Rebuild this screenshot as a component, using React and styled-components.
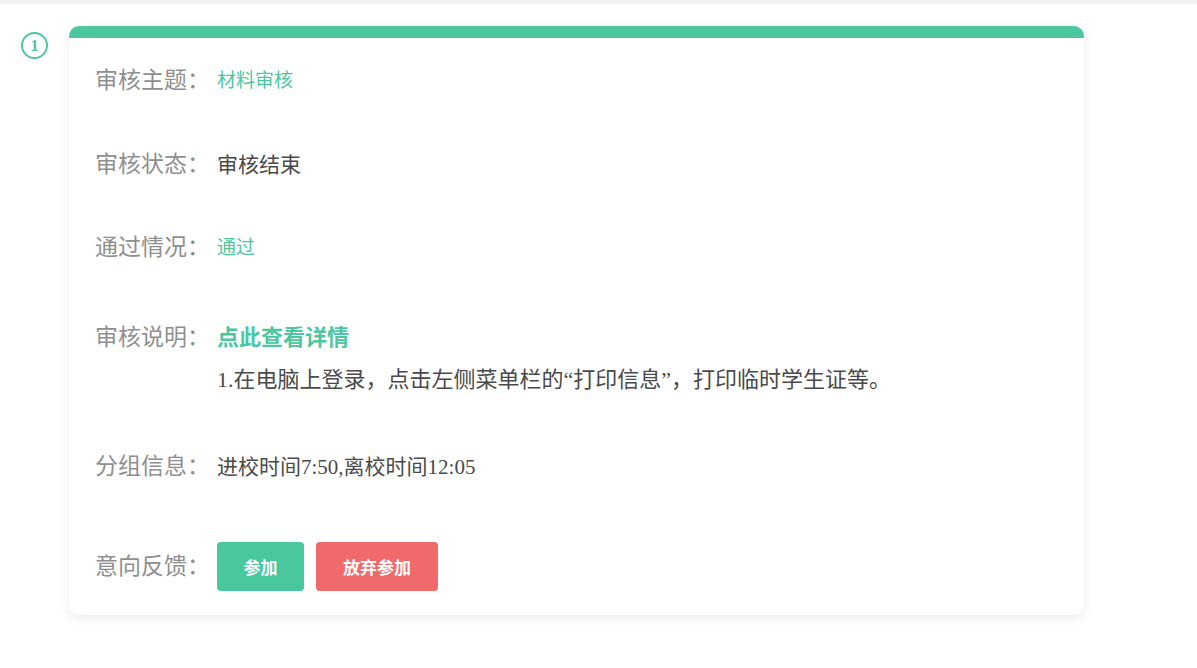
import React from "react";
import styled, { createGlobalStyle } from "styled-components";

const GlobalStyle = createGlobalStyle`
  html, body {
    margin: 0;
    padding: 0;
    background: #fff;
  }
  body {
    font-family: "Liberation Serif", "Noto Sans CJK SC", serif;
  }
`;

const TopStrip = styled.div`
  height: 4px;
  background: #f1f1f3;
`;

const Page = styled.div`
  display: flex;
  align-items: flex-start;
  gap: 21px;
  padding: 22px 0 40px 21px;
`;

const Step = styled.div`
  box-sizing: border-box;
  width: 27px;
  height: 27px;
  margin-top: 6px;
  border: 2px solid #4cc79f;
  border-radius: 50%;
  display: flex;
  align-items: center;
  justify-content: center;
  color: #4cc79f;
  font-size: 16px;
  font-weight: bold;
  flex-shrink: 0;
`;

const Card = styled.div`
  width: 1015px;
  background: #fff;
  border-radius: 10px;
  box-shadow: 0 3px 12px rgba(0, 0, 0, 0.08);
  overflow: hidden;
`;

const Bar = styled.div`
  height: 12px;
  background: #4cc79f;
`;

const Body = styled.div`
  padding: 28px 26px 24px;
`;

const Row = styled.div`
  display: flex;
  align-items: ${(p) => (p.$center ? "center" : "flex-start")};
  margin-top: ${(p) => p.$top || 0}px;
`;

const Label = styled.div`
  width: 122px;
  flex-shrink: 0;
  font-size: 23px;
  line-height: 30px;
  color: #8f8f8f;
  white-space: nowrap;
`;

const Value = styled.div`
  font-size: ${(p) => p.$size || 21}px;
  line-height: 30px;
  color: ${(p) => (p.$green ? "#4cc79f" : "#4a4a4a")};
  font-weight: ${(p) => (p.$bold ? "bold" : "normal")};
`;

const Stack = styled.div`
  display: flex;
  flex-direction: column;
  gap: 12px;
`;

const Desc = styled.div`
  font-size: 22px;
  line-height: 30px;
  color: #4a4a4a;
  white-space: nowrap;
`;

const Buttons = styled.div`
  display: flex;
  gap: 12px;
`;

const Btn = styled.button`
  height: 49px;
  width: ${(p) => p.$w}px;
  border: none;
  border-radius: 4px;
  background: ${(p) => (p.$danger ? "#f06a6c" : "#48c89c")};
  color: #fff;
  font-family: "Noto Sans CJK SC", sans-serif;
  font-size: 17px;
  font-weight: bold;
  cursor: pointer;
`;

export default function App() {
  return (
    <>
      <GlobalStyle />
      <TopStrip />
      <Page>
        <Step>1</Step>
        <Card>
          <Bar />
          <Body>
            <Row>
              <Label>审核主题：</Label>
              <Value $green $size={19}>材料审核</Value>
            </Row>
            <Row $top={54}>
              <Label>审核状态：</Label>
              <Value>审核结束</Value>
            </Row>
            <Row $top={53}>
              <Label>通过情况：</Label>
              <Value $green $size={19}>通过</Value>
            </Row>
            <Row $top={60}>
              <Label>审核说明：</Label>
              <Stack>
                <Value $green $size={22} $bold>点此查看详情</Value>
                <Desc>1.在电脑上登录，点击左侧菜单栏的“打印信息”，打印临时学生证等。</Desc>
              </Stack>
            </Row>
            <Row $top={57}>
              <Label>分组信息：</Label>
              <Value>进校时间7:50,离校时间12:05</Value>
            </Row>
            <Row $top={60} $center>
              <Label>意向反馈：</Label>
              <Buttons>
                <Btn $w={87}>参加</Btn>
                <Btn $w={122} $danger>放弃参加</Btn>
              </Buttons>
            </Row>
          </Body>
        </Card>
      </Page>
    </>
  );
}
